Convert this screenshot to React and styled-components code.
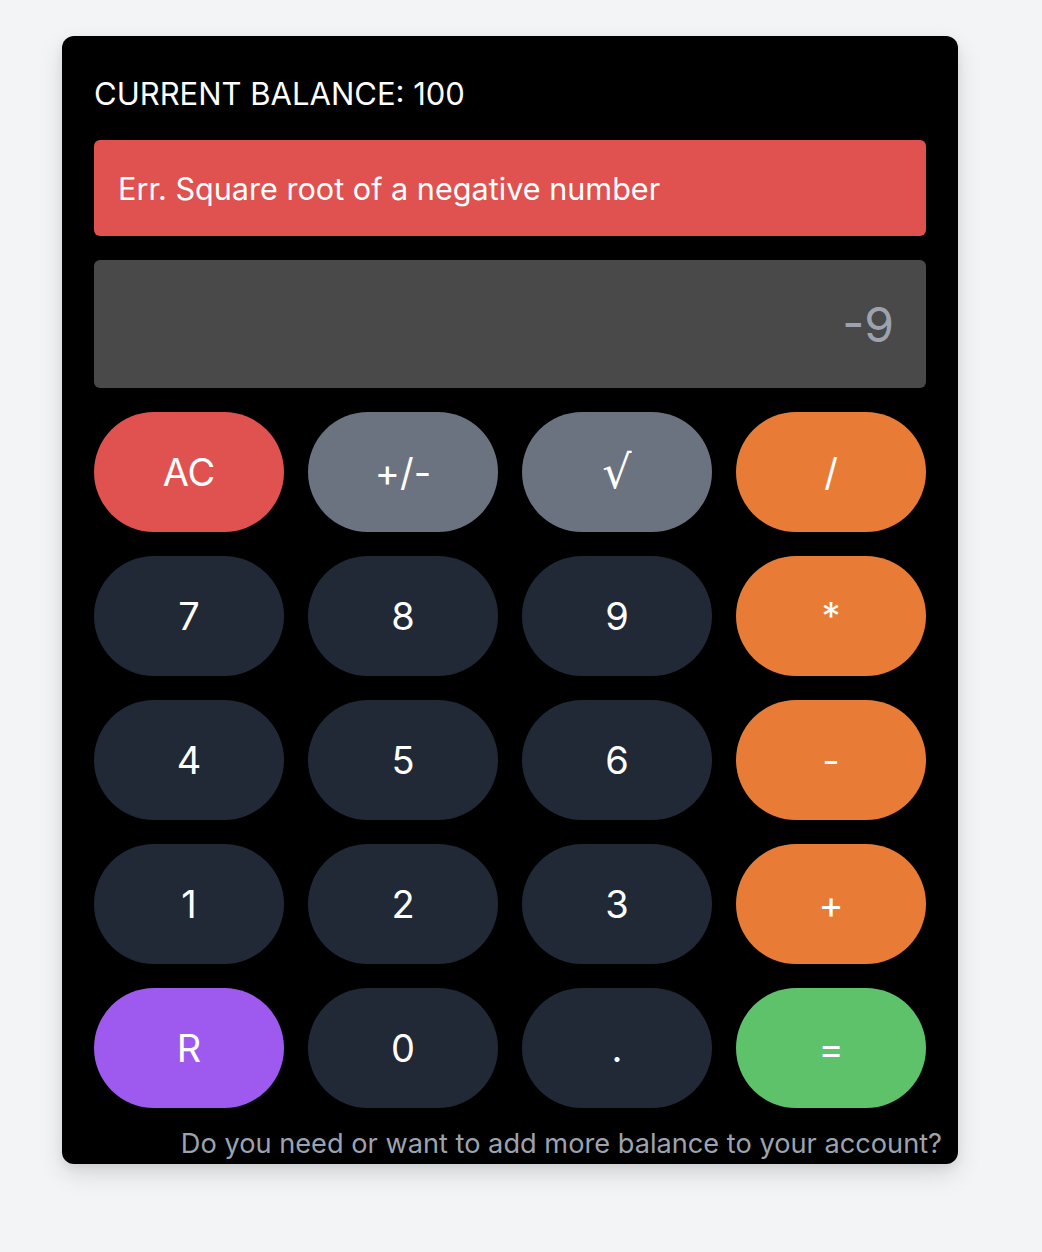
import React from 'react';
import styled, { createGlobalStyle } from 'styled-components';

const Global = createGlobalStyle`
  body {
    margin: 0;
    background: #f3f4f6;
    font-family: Inter, "Open Sans", sans-serif;
  }
`;

const Page = styled.div`
  padding: 36px 0 0 62px;
  min-height: 1252px;
  box-sizing: border-box;
`;

const Card = styled.div`
  width: 896px;
  height: 1128px;
  box-sizing: border-box;
  background: #000;
  border-radius: 12px;
  padding: 32px;
  box-shadow: 0 10px 25px rgba(0, 0, 0, 0.12), 0 4px 10px rgba(0, 0, 0, 0.06);
  display: flex;
  flex-direction: column;

  & > * {
    flex-shrink: 0;
  }
`;

const Balance = styled.h2`
  margin: 0;
  color: #fff;
  font-size: 31px;
  font-weight: 400;
  height: 50px;
  display: flex;
  align-items: center;
`;

const ErrorBox = styled.div`
  margin-top: 22px;
  background: #df524f;
  color: #fff;
  border-radius: 6px;
  height: 96px;
  padding: 0 24px;
  display: flex;
  align-items: center;
  font-size: 30.6px;
`;

const Display = styled.div`
  margin-top: 24px;
  height: 128px;
  background: #494949;
  border-radius: 6px;
  padding: 0 32px;
  display: flex;
  align-items: center;
  justify-content: flex-end;
  color: #9ca3af;
  font-size: 48px;
`;

const Keys = styled.div`
  margin-top: 24px;
  display: grid;
  grid-template-columns: repeat(4, 1fr);
  grid-auto-rows: 120px;
  gap: 24px;
`;

const colors = {
  red: '#df524f',
  gray: '#6b7280',
  orange: '#e87c37',
  dark: '#212836',
  purple: '#9e59ee',
  green: '#5ec26a',
};

const Key = styled.button`
  border: none;
  border-radius: 60px;
  background: ${p => colors[p.$tone]};
  color: #fff;
  font-family: ${p => (p.$symbol ? '"DejaVu Sans", sans-serif' : 'inherit')};
  font-size: ${p => (p.$symbol ? '46px' : '38px')};
  display: flex;
  align-items: center;
  justify-content: center;
  padding: 0;
  cursor: pointer;
`;

const Footer = styled.p`
  margin: 20px -16px 0 0;
  text-align: right;
  color: #9ca3af;
  font-size: 27.2px;
  line-height: 32px;
  white-space: nowrap;
`;

const keys = [
  ['AC', 'red'], ['+/-', 'gray'], ['√', 'gray'], ['/', 'orange'],
  ['7', 'dark'], ['8', 'dark'], ['9', 'dark'], ['*', 'orange'],
  ['4', 'dark'], ['5', 'dark'], ['6', 'dark'], ['-', 'orange'],
  ['1', 'dark'], ['2', 'dark'], ['3', 'dark'], ['+', 'orange'],
  ['R', 'purple'], ['0', 'dark'], ['.', 'dark'], ['=', 'green'],
];

const App = () => {
  return (
    <Page>
      <Global />
      <Card>
        <Balance>CURRENT BALANCE: 100</Balance>
        <ErrorBox>Err. Square root of a negative number</ErrorBox>
        <Display>-9</Display>
        <Keys>
          {keys.map(([label, tone]) => (
            <Key key={label} $tone={tone} $symbol={label === '√'}>
              {label}
            </Key>
          ))}
        </Keys>
        <Footer>Do you need or want to add more balance to your account?</Footer>
      </Card>
    </Page>
  );
};

export default App;
